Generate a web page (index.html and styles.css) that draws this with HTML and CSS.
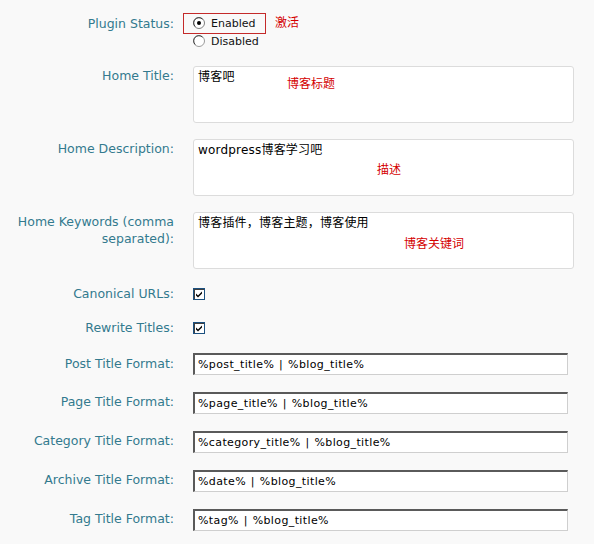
FILE: index.html
```html
<!DOCTYPE html>
<html>
<head>
<meta charset="utf-8">
<link rel="stylesheet" href="styles.css">
</head>
<body>
<div class="form">
  <div class="row status">
    <div class="label">Plugin Status:</div>
    <div class="field">
      <div class="radios">
        <span class="hilite"></span>
        <span class="note note-status">激活</span>
        <div class="radio-line">
          <svg class="radio" width="12" height="12" viewBox="0 0 12 12"><circle cx="6" cy="6" r="5.5" fill="#fff" stroke="#7f7f7f"/><path d="M2.2 9.5 A5 5 0 0 1 9.5 2.2" fill="none" stroke="#404040" stroke-width="1"/><circle cx="6" cy="6" r="2" fill="#000"/></svg>
          <span>Enabled</span>
        </div>
        <div class="radio-line">
          <svg class="radio" width="12" height="12" viewBox="0 0 12 12"><circle cx="6" cy="6" r="5.5" fill="#fff" stroke="#9a9a9a"/><path d="M2.2 9.5 A5 5 0 0 1 9.5 2.2" fill="none" stroke="#404040" stroke-width="1"/></svg>
          <span>Disabled</span>
        </div>
      </div>
    </div>
  </div>

  <div class="row tall">
    <div class="label">Home Title:</div>
    <div class="field">
      <div class="area">博客吧<span class="note note-title">博客标题</span></div>
    </div>
  </div>

  <div class="row tall">
    <div class="label">Home Description:</div>
    <div class="field">
      <div class="area">wordpress博客学习吧<span class="note note-desc">描述</span></div>
    </div>
  </div>

  <div class="row tall">
    <div class="label">Home Keywords (comma<br>separated):</div>
    <div class="field">
      <div class="area">博客插件，博客主题，博客使用<span class="note note-kw">博客关键词</span></div>
    </div>
  </div>

  <div class="row check first-check">
    <div class="label">Canonical URLs:</div>
    <div class="field"><svg class="cb" width="12" height="12" viewBox="0 0 12 12"><rect x="0.5" y="0.5" width="11" height="11" fill="#fff" stroke="#1c5180"/><rect x="1" y="1" width="10" height="1" fill="#404040"/><rect x="1" y="1" width="1" height="10" fill="#404040"/><path d="M3 5.5 L5 7.5 L9 3.5 L9 5.5 L5 9.5 L3 7.5 Z" fill="#000"/></svg></div>
  </div>

  <div class="row check">
    <div class="label">Rewrite Titles:</div>
    <div class="field"><svg class="cb" width="12" height="12" viewBox="0 0 12 12"><rect x="0.5" y="0.5" width="11" height="11" fill="#fff" stroke="#1c5180"/><rect x="1" y="1" width="10" height="1" fill="#404040"/><rect x="1" y="1" width="1" height="10" fill="#404040"/><path d="M3 5.5 L5 7.5 L9 3.5 L9 5.5 L5 9.5 L3 7.5 Z" fill="#000"/></svg></div>
  </div>

  <div class="row inp first-inp">
    <div class="label">Post Title Format:</div>
    <div class="field"><div class="input">%post_title% | %blog_title%</div></div>
  </div>
  <div class="row inp">
    <div class="label">Page Title Format:</div>
    <div class="field"><div class="input">%page_title% | %blog_title%</div></div>
  </div>
  <div class="row inp">
    <div class="label">Category Title Format:</div>
    <div class="field"><div class="input">%category_title% | %blog_title%</div></div>
  </div>
  <div class="row inp">
    <div class="label">Archive Title Format:</div>
    <div class="field"><div class="input">%date% | %blog_title%</div></div>
  </div>
  <div class="row inp">
    <div class="label">Tag Title Format:</div>
    <div class="field"><div class="input">%tag% | %blog_title%</div></div>
  </div>
</div>
</body>
</html>
```

FILE: styles.css
```css
html, body {
  margin: 0;
  padding: 0;
  background: #f9f9f9;
}
body {
  width: 594px;
  height: 544px;
  overflow: hidden;
  font-family: "DejaVu Sans", Verdana, "Noto Sans CJK SC", sans-serif;
}
.form {
  padding-top: 14px;
}
.row {
  display: grid;
  grid-template-columns: 174px 1fr;
  column-gap: 19px;
  align-items: start;
}
.label {
  text-align: right;
  color: #337a8e;
  font-size: 12.5px;
  line-height: 17px;
  padding-top: 1px;
}
.field {
  position: relative;
}
.radios {
  position: relative;
  font-size: 11px;
  color: #111;
}
.radio-line {
  display: flex;
  align-items: center;
  height: 18px;
}
.radio {
  display: block;
  margin-right: 6px;
}
.hilite {
  position: absolute;
  left: -10px;
  top: -1px;
  width: 81px;
  height: 19px;
  border: 1px solid #c42a2a;
}
.note {
  position: absolute;
  color: #d40000;
  font-size: 12px;
  line-height: 14px;
  letter-spacing: 0;
  font-family: "Noto Sans CJK SC", sans-serif;
  white-space: nowrap;
}
.note-status { left: 82px; top: 1px; }
.note-title { left: 93px; top: 9px; }
.note-desc { left: 183px; top: 22px; }
.note-kw { left: 210px; top: 23px; }
.tall {
  margin-top: 16px;
}
.area {
  position: relative;
  box-sizing: border-box;
  width: 381px;
  height: 57px;
  background: #fff;
  border: 1px solid #dcdcdc;
  border-radius: 3px;
  padding: 3px 4px;
  font-size: 12px;
  line-height: 14px;
  letter-spacing: 0.2px;
  color: #000;
  font-family: "DejaVu Sans", "Noto Sans CJK SC", sans-serif;
}
.check {
  margin-top: 16px;
  height: 18px;
}
.first-check {
  margin-top: 15px;
}
.cb {
  display: block;
  margin-top: 4px;
}
.inp {
  margin-top: 17px;
}
.first-inp .label {
  padding-top: 2px;
}
.input {
  box-sizing: border-box;
  width: 375px;
  height: 22px;
  background: #fff;
  border-top: 2px solid #5a5a5a;
  border-left: 2px solid #5a5a5a;
  border-right: 1px solid #cfcfcf;
  border-bottom: 1px solid #cfcfcf;
  padding: 2px 3px;
  font-size: 11px;
  line-height: 16px;
  letter-spacing: 0.38px;
  word-spacing: 1px;
  color: #000;
  white-space: nowrap;
}
```
